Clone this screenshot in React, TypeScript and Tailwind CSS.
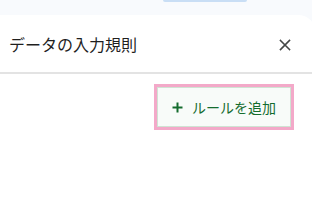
import React from "react";

export default function App() {
  return (
    <div
      className="w-[312px] h-[224px] overflow-hidden bg-[#f8fafd] flex flex-col"
      style={{ fontFamily: '"Noto Sans CJK JP", "Noto Sans", sans-serif' }}
    >
      <div className="h-[15px] shrink-0 relative">
        <div className="absolute left-[163px] top-0 w-[84px] h-[2px] bg-[#c9def5] rounded-b-sm" />
      </div>
      <div className="flex-1 bg-white rounded-tr-[18px] -ml-[10px] w-[326px] -mr-[14px] flex flex-col">
        <div className="h-[57px] shrink-0 flex items-center justify-between pl-[19px] pr-[25px]">
          <span className="text-[16px] text-[#1f1f1f] leading-none">データの入力規則</span>
          <svg width="12" height="12" viewBox="0 0 12 12" className="mt-[3px]">
            <path d="M1.5 1.5 L10.5 10.5 M10.5 1.5 L1.5 10.5" stroke="#444746" strokeWidth="1.6" strokeLinecap="square" />
          </svg>
        </div>
        <div className="h-[2px] bg-[#e3e3e3] shrink-0" />
        <div className="flex justify-end pr-[22px] pt-[10px]">
          <div className="border-[3px] border-[#f3a9c9] w-[140px] h-[46px] flex">
            <div className="flex-1 border border-[#cfe3d3] bg-[#f8fbf9] flex items-center pl-[14px] gap-[9px] text-[#146c2e]">
              <svg width="11" height="11" viewBox="0 0 11 11">
                <path d="M5.5 0.5 V10.5 M0.5 5.5 H10.5" stroke="#146c2e" strokeWidth="2" />
              </svg>
              <span className="text-[14px] leading-none">ルールを追加</span>
            </div>
          </div>
        </div>
      </div>
    </div>
  );
}
